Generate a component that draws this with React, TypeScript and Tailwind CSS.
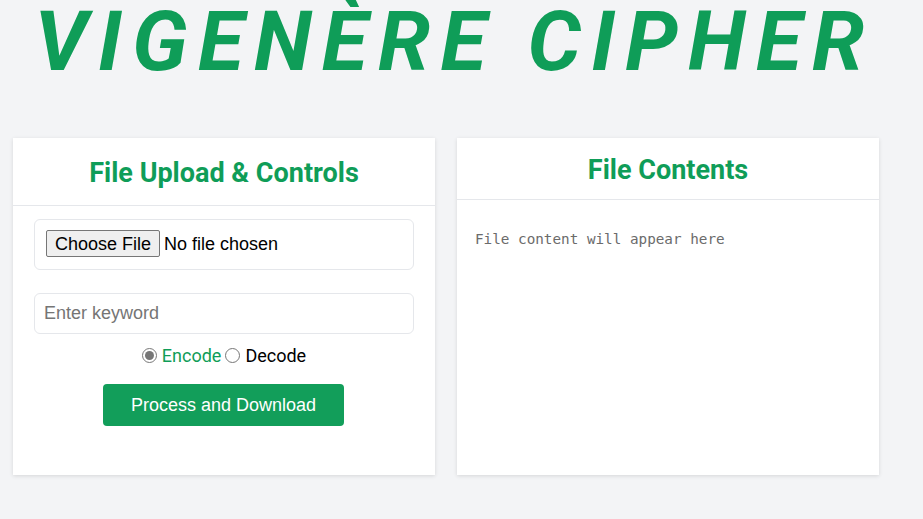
import React, { useState } from 'react';

const GREEN = 'text-[#0f9d58]';

export default function App() {
  const [mode, setMode] = useState<'encode' | 'decode'>('encode');

  return (
    <div className="min-h-[519px] bg-[#f3f4f6] font-['Roboto',sans-serif] overflow-hidden">
      <h1 className={`pr-[14px] text-center text-[84px] leading-none font-bold italic tracking-[10.3px] ${GREEN} h-[84px]`}>
        VIGENÈRE CIPHER
      </h1>

      <div className="mt-[54px] flex gap-[22px] pl-[13px]">
        {/* left card */}
        <div className="w-[422px] h-[337px] bg-white shadow-[0_1px_4px_rgba(0,0,0,0.12)]">
          <div className="h-[68px] pt-[3px] flex items-center justify-center border-b border-[#e5e7eb]">
            <h2 className={`text-[27px] font-bold ${GREEN}`}>File Upload &amp; Controls</h2>
          </div>
          <div className="px-[21px] pt-[13px]">
            <div className="h-[51px] border border-[#e5e7eb] rounded-md flex items-center px-[11px]">
              <input
                type="file"
                className="-mt-[1px] font-['Liberation_Sans',sans-serif] text-[18px] text-black file:font-['Liberation_Sans',sans-serif] file:text-[18px] file:px-[8px] file:py-0 file:h-[27px] file:mr-[4px] file:bg-[#efefef] file:border file:border-[#767676] file:rounded-[2px] file:text-black"
              />
            </div>
            <input
              type="text"
              placeholder="Enter keyword"
              className="mt-[23px] w-full h-[41px] border border-[#e5e7eb] rounded-md px-[9px] font-['Liberation_Sans',sans-serif] text-[18px] placeholder:text-[#757575] outline-none"
            />
            <div className="mt-[10px] flex items-center justify-center text-[18px] h-[22px]">
              <label className="flex items-center">
                <input
                  type="radio"
                  name="mode"
                  checked={mode === 'encode'}
                  onChange={() => setMode('encode')}
                  className="w-[15px] h-[15px] mr-[5px] accent-[#777]"
                />
                <span className={mode === 'encode' ? GREEN : 'text-black'}>Encode</span>
              </label>
              <label className="flex items-center ml-[4px]">
                <input
                  type="radio"
                  name="mode"
                  checked={mode === 'decode'}
                  onChange={() => setMode('decode')}
                  className="w-[15px] h-[15px] mr-[5px] accent-[#777]"
                />
                <span className={mode === 'decode' ? GREEN : 'text-black'}>Decode</span>
              </label>
            </div>
            <div className="mt-[18px] flex justify-center">
              <button className="-ml-[1px] w-[241px] h-[42px] rounded bg-[#129e5a] text-white text-[18px] font-['Liberation_Sans',sans-serif]">
                Process and Download
              </button>
            </div>
          </div>
        </div>

        {/* right card */}
        <div className="w-[422px] h-[337px] bg-white shadow-[0_1px_4px_rgba(0,0,0,0.12)]">
          <div className="h-[62px] pt-[3px] flex items-center justify-center border-b border-[#e5e7eb]">
            <h2 className={`text-[27px] font-bold ${GREEN}`}>File Contents</h2>
          </div>
          <pre className="px-[18px] pt-[29px] font-['DejaVu_Sans_Mono',monospace] text-[14.3px] text-[#6b6b6b]">
            File content will appear here
          </pre>
        </div>
      </div>
    </div>
  );
}
